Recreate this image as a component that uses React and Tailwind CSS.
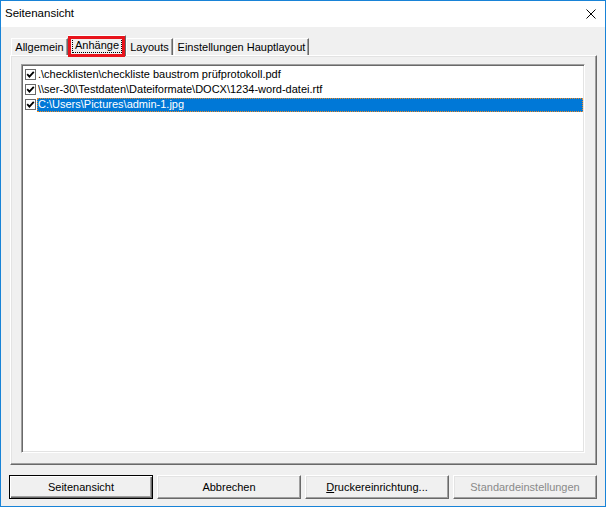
import React from 'react'

const files = [
    { path: '.\\checklisten\\checkliste baustrom prüfprotokoll.pdf', selected: false },
    { path: '\\\\ser-30\\Testdaten\\Dateiformate\\DOCX\\1234-word-datei.rtf', selected: false },
    { path: 'C:\\Users\\Pictures\\admin-1.jpg', selected: true },
]

const raised = 'border border-t-white border-l-white border-r-[#696969] border-b-[#696969] shadow-[inset_-1px_-1px_0_#a0a0a0,inset_1px_1px_0_#e3e3e3]'

const CheckBox = () => (
    <div className="w-[11px] h-[11px] border border-[#6a6a6a] bg-white flex items-center justify-center shrink-0">
        <svg width="9" height="9" viewBox="0 0 9 9">
            <polyline points="1.2,4.2 3.4,6.6 7.8,1.8" fill="none" stroke="#000" strokeWidth="1.8" />
        </svg>
    </div>
)

const Tab = ({ label, width, selected }) => {
    if (selected) {
        return (
            <div className={`relative z-10 h-[21px] -mb-[1px] ${width} bg-[#f0f0f0] border-t border-l border-white border-r border-r-[#696969] shadow-[inset_-1px_0_0_#a0a0a0] flex items-start justify-center pt-[2px]`}>
                <span className="border border-dotted border-black px-[2px] leading-[13px]">{label}</span>
                <div className="absolute -left-[1px] top-0 w-[57px] h-[21px] border-[3px] border-[#e8141c]" />
            </div>
        )
    }
    return (
        <div className={`h-[17px] ${width} border-t border-l border-white border-r border-r-[#696969] shadow-[inset_-1px_0_0_#a0a0a0] flex items-center justify-center`}>
            {label}
        </div>
    )
}

const Button = ({ children, isDefault, disabled }) => (
    <button
        className={`w-[144px] h-[24px] bg-[#f0f0f0] flex items-center justify-center ${isDefault
            ? 'border border-black shadow-[inset_1px_1px_0_#fff,inset_-1px_-1px_0_#696969,inset_-2px_-2px_0_#a0a0a0]'
            : raised} ${disabled ? 'text-[#8a8a8a]' : 'text-black'}`}
    >
        {children}
    </button>
)

const App = () => {
    return (
        <div className="w-[606px] h-[507px] border border-[#1883d7] bg-[#f0f0f0] flex flex-col font-['Liberation_Sans',Arial,sans-serif] text-[11px] text-black select-none">
            {/* Titelleiste */}
            <div className="h-[26px] bg-white flex items-center justify-between pl-[4px] pr-[9px]">
                <span className="text-[11.5px]">Seitenansicht</span>
                <svg width="10" height="10" viewBox="0 0 10 10">
                    <path d="M0.5 0.5 L9.5 9.5 M9.5 0.5 L0.5 9.5" stroke="#000" strokeWidth="1" />
                </svg>
            </div>

            {/* Reiter */}
            <div className="h-[28px] flex items-end pl-[10px]">
                <Tab label="Allgemein" width="w-[57px]" />
                <Tab label="Anhänge" width="w-[58px]" selected />
                <Tab label="Layouts" width="w-[47px]" />
                <div className="w-[1px]" />
                <Tab label="Einstellungen Hauptlayout" width="w-[135px]" />
            </div>

            {/* Panel */}
            <div className="pl-[9px]">
                <div className={`w-[587px] h-[410px] pl-[10px] pr-[11px] pt-[8px] pb-[11px] ${raised}`}>
                    <div className="w-full h-full bg-white border border-t-[#a0a0a0] border-l-[#a0a0a0] border-r-white border-b-white shadow-[inset_1px_1px_0_#696969,inset_-1px_-1px_0_#e3e3e3] p-[1px]">
                        <div className="pt-[1px] flex flex-col">
                            {files.map((f) => (
                                <div key={f.path} className="h-[15px] flex items-center">
                                    <div className="ml-[2px] mr-[1px]">
                                        <CheckBox />
                                    </div>
                                    {f.selected ? (
                                        <div className="flex-1 h-[14px] bg-[#0078d7] text-white border border-dotted border-[#f08a24] flex items-center pl-[0px] whitespace-pre">
                                            {f.path}
                                        </div>
                                    ) : (
                                        <div className="flex-1 h-[14px] flex items-center pl-[1px] whitespace-pre">
                                            {f.path}
                                        </div>
                                    )}
                                </div>
                            ))}
                        </div>
                    </div>
                </div>
            </div>

            {/* Knöpfe */}
            <div className="mt-[10px] pl-[8px] flex gap-[4px]">
                <Button isDefault>Seitenansicht</Button>
                <Button>Abbrechen</Button>
                <Button><span><span className="underline">D</span>ruckereinrichtung...</span></Button>
                <Button disabled>Standardeinstellungen</Button>
            </div>
        </div>
    )
}

export default App
